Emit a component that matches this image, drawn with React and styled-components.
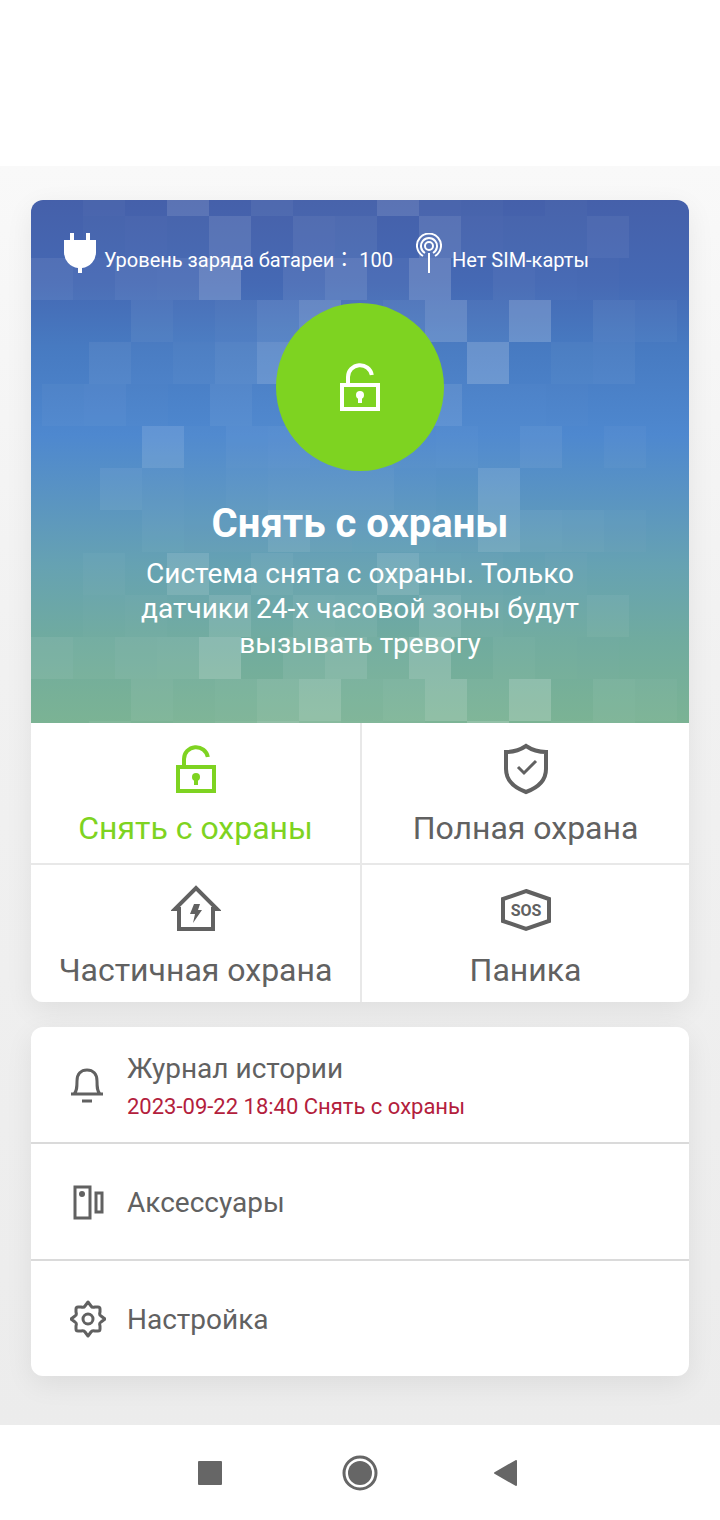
import styled, { createGlobalStyle } from "styled-components";

const GlobalStyle = createGlobalStyle`
  * {
    box-sizing: border-box;
  }
  body {
    margin: 0;
    background-color: #fff;
    color: #616161;
    font-family: Roboto, "Noto Sans CJK TC", sans-serif;
  }
`;

const Page = styled.div`
  display: flex;
  flex-direction: column;
  min-height: 100vh;
`;

const TopBar = styled.header`
  height: 166px;
  background-color: #fff;
`;

const Content = styled.main`
  flex: 1;
  display: flex;
  flex-direction: column;
  gap: 25px;
  padding: 34px 31px 49px;
  background: linear-gradient(#f9f9f9, #f1f1f1 40%, #ececec);
`;

const Card = styled.section`
  border-radius: 12px;
  overflow: hidden;
  background-color: #fff;
  box-shadow: 0 8px 28px rgba(0, 0, 0, 0.07);
`;

const Hero = styled.div`
  position: relative;
  display: flex;
  flex-direction: column;
  align-items: center;
  padding: 33px 33px 62px;
  color: #fff;
  background: linear-gradient(
    #4560aa,
    #4569b4 16%,
    #477ac1 28%,
    #4e88cf 45%,
    #5892c4 55%,
    #66a2b2 70%,
    #70ab9f 84%,
    #7bb394
  );
`;

const Mosaic = styled.svg`
  position: absolute;
  inset: 0;
  width: 100%;
  height: 100%;
`;

const StatusRow = styled.div`
  position: relative;
  align-self: stretch;
  display: flex;
  gap: 23px;
`;

const Status = styled.div`
  display: flex;
  align-items: flex-end;
  gap: ${(props) => props.$gap}px;
  font-size: 20px;
  line-height: 26px;
`;

const StateCircle = styled.div`
  position: relative;
  display: flex;
  align-items: center;
  justify-content: center;
  width: 168px;
  height: 168px;
  margin-top: 30px;
  border-radius: 50%;
  background-color: #7ed321;
`;

const StateTitle = styled.h1`
  position: relative;
  margin: 29px 0 8px;
  font-size: 40px;
  line-height: 48px;
  font-weight: 700;
`;

const StateText = styled.p`
  position: relative;
  margin: 0;
  max-width: 480px;
  font-size: 28px;
  line-height: 35px;
  text-align: center;
`;

const Actions = styled.div`
  display: grid;
  grid-template-columns: 1fr 1fr;
  grid-template-rows: 140px 137px;
  row-gap: 2px;
  background-color: #e8e8e8;
`;

const ActionButton = styled.button`
  display: flex;
  flex-direction: column;
  align-items: center;
  gap: 13px;
  padding: 20px 0 0;
  border: 0;
  background-color: #fff;
  color: ${(props) => (props.$active ? "#7ed321" : "#616161")};
  font-family: inherit;
  font-size: 32px;
  line-height: 40px;
  cursor: pointer;
  &:nth-child(even) {
    border-left: 2px solid #e8e8e8;
  }
`;

const SosText = styled.text`
  font-family: "Liberation Sans Narrow", Roboto, sans-serif;
  font-size: 16px;
  font-weight: 700;
`;

const MenuLink = styled.a`
  display: flex;
  align-items: center;
  gap: 21px;
  height: 115px;
  padding: 0 39px;
  color: #616161;
  text-decoration: none;
  & + & {
    height: 117px;
    border-top: 2px solid #dadada;
  }
`;

const MenuText = styled.div`
  display: flex;
  flex-direction: column;
  gap: 3px;
  padding-top: 2px;
  font-size: 28px;
  line-height: 40px;
`;

const LastEvent = styled.span`
  color: #b3203c;
  font-size: 22px;
  line-height: 30px;
`;

const NavBar = styled.nav`
  display: flex;
  justify-content: center;
  height: 95px;
  background-color: #fff;
`;

const NavButton = styled.button`
  display: flex;
  align-items: center;
  justify-content: center;
  width: 150px;
  padding: 0;
  border: 0;
  background-color: transparent;
  color: #666;
  cursor: pointer;
`;

const TILE = 42;

// x is the left edge of the first tile, tiles hold the opacity of each next one
const mosaicRows = [
  { y: -26, x: 10, tiles: [0, 0.03, 0, 0.12, 0, 0.06, 0.02, 0.02, 0.12, 0.03, 0.02, 0, 0.02] },
  { y: 16, x: 10, tiles: [0, 0.02, 0.03, 0.02, 0.11, 0.01, 0.07, 0.06, 0, 0.11, 0.03, 0.02, 0.02, 0.05] },
  { y: 58, x: 0, tiles: [0.07, 0.04, 0.07, 0.08, 0.19, 0, 0.07, 0.13, 0.04, 0.17, 0, 0.04, 0.02, 0.01] },
  { y: 100, x: 16, tiles: [0, 0, 0.06, 0.03, 0.05, 0.1, 0.18, 0.05, 0.08, 0.17, 0.04, 0.19, 0, 0.05, 0.03] },
  { y: 142, x: 16, tiles: [0, 0.06, 0.02, 0.04, 0.08, 0.17, 0.1, 0.06, 0.05, 0.02, 0.19, 0, 0.03, 0.04] },
  { y: 184, x: 11, tiles: [0.03, 0.04, 0.01, 0, 0.06, 0.02, 0.04, 0.04, 0.05, 0.1, 0.02, 0.02, 0.01] },
  { y: 226, x: 27, tiles: [0, 0, 0.12, 0.02, 0.05, 0.06, 0.05, 0.04, 0.03, 0.04, 0.02, 0.06, 0, 0.03] },
  { y: 268, x: 27, tiles: [0, 0.06, 0.03, 0.02, 0.04, 0.05, 0.05, 0.05, 0.02, 0.01, 0.12, 0, 0] },
  { y: 310, x: 27, tiles: [0, 0, 0.03, 0.02, 0.02, 0.09, 0.04, 0.03, 0.03, 0.02, 0.11, 0.05, 0.04, 0.02] },
];

const mosaicPeriod = 379;

function LockIcon() {
  return (
    <svg width="40" height="52" viewBox="0 -2 40 52" fill="none" stroke="currentColor" strokeWidth="4">
      <path d="M8 22v-8a12 12 0 0 1 23.8-2" />
      <path d="M2 22h36v24H2z" />
      <path d="M20 33v7" />
      <circle cx="20" cy="32" r="4" fill="currentColor" stroke="none" />
    </svg>
  );
}

function ShieldIcon() {
  return (
    <svg width="46" height="52" viewBox="0 0 46 52" fill="none" stroke="currentColor" strokeWidth="4">
      <path d="M23 3C17 7 10 9 3 9v17c0 12 9 19 20 23 11-4 20-11 20-23V9C36 9 29 7 23 3z" />
      <path d="M15 24l6 6 12-12" strokeWidth="3" />
    </svg>
  );
}

function HouseIcon() {
  return (
    <svg width="50" height="52" viewBox="0 0 50 52" fill="none" stroke="currentColor" strokeWidth="4">
      <path d="M8 24H4L25 3l21 21h-4M8 22v22h34V22" />
      <path d="M23 19h6l-2 6h4l-9 13 2-9h-5z" fill="currentColor" stroke="none" />
    </svg>
  );
}

function SosIcon() {
  return (
    <svg width="50" height="52" viewBox="0 0 50 52" fill="none" stroke="currentColor" strokeWidth="4">
      <path d="M25 6l23 8v22l-23 8-23-8V14z" />
      <SosText x="25" y="31" textAnchor="middle" fill="currentColor" stroke="none">
        SOS
      </SosText>
    </svg>
  );
}

function PlugIcon() {
  return (
    <svg width="32" height="40" viewBox="0 0 32 40" fill="currentColor">
      <path d="M6 0h4v7h12V0h4v7h6v12a16 16 0 0 1-14 16v5h-4v-5A16 16 0 0 1 0 19V7h6z" />
    </svg>
  );
}

function AntennaIcon() {
  return (
    <svg width="26" height="40" viewBox="0 0 26 40" fill="none" stroke="currentColor" strokeWidth="2">
      <circle cx="13" cy="13" r="4" />
      <path d="M9 20a8 8 0 1 1 8 0M7 23a12 12 0 1 1 12 0M13 20v20" />
    </svg>
  );
}

function BellIcon() {
  return (
    <svg width="36" height="38" viewBox="0 0 36 38" fill="none" stroke="currentColor" strokeWidth="3">
      <path d="M1 28h32M4 28c3-3 3-7 3-13 0-7 4-11 10-11s10 4 10 11c0 6 0 10 3 13M12 35h10" />
    </svg>
  );
}

function AccessoriesIcon() {
  return (
    <svg width="36" height="38" viewBox="0 0 36 38" fill="none" stroke="currentColor" strokeWidth="3">
      <path d="M5 4h15v31H5zM26 10h6v19h-6z" />
      <circle cx="12" cy="11" r="3" fill="currentColor" stroke="none" />
    </svg>
  );
}

function GearIcon() {
  return (
    <svg width="36" height="38" viewBox="0 0 36 38" fill="none" stroke="currentColor" strokeWidth="3" strokeLinejoin="round">
      <path d="M18 2l3 4q1 2 4 1h3q2 0 2 2v3q-1 3 1 4l4 3-4 3q-2 1-1 4v3q0 2-2 2h-3q-3-1-4 1l-3 4-3-4q-1-2-4-1H8q-2 0-2-2v-3q1-3-1-4l-4-3 4-3q2-1 1-4V9q0-2 2-2h3q3 1 4-1z" />
      <circle cx="18" cy="19" r="5" />
    </svg>
  );
}

const actions = [
  { label: "Снять с охраны", icon: <LockIcon />, active: true },
  { label: "Полная охрана", icon: <ShieldIcon /> },
  { label: "Частичная охрана", icon: <HouseIcon /> },
  { label: "Паника", icon: <SosIcon /> },
];

const menu = [
  { label: "Журнал истории", icon: <BellIcon />, event: "2023-09-22 18:40 Снять с охраны" },
  { label: "Аксессуары", icon: <AccessoriesIcon /> },
  { label: "Настройка", icon: <GearIcon /> },
];

function HeroMosaic() {
  const rows = [...mosaicRows, ...mosaicRows.map((row) => ({ ...row, y: row.y + mosaicPeriod }))];
  return (
    <Mosaic viewBox="0 0 658 523" preserveAspectRatio="xMidYMid slice" aria-hidden="true">
      {rows.map((row) =>
        row.tiles.map((opacity, i) => (
          <rect
            key={`${row.y}-${i}`}
            x={row.x + i * TILE}
            y={row.y}
            width={TILE}
            height={TILE}
            fill="#fff"
            fillOpacity={opacity}
          />
        ))
      )}
    </Mosaic>
  );
}

export default function App() {
  return (
    <>
      <GlobalStyle />
      <Page>
        <TopBar />
        <Content>
          <Card>
            <Hero>
              <HeroMosaic />
              <StatusRow>
                <Status $gap={8}>
                  <PlugIcon />
                  <span>Уровень заряда батареи： 100</span>
                </Status>
                <Status $gap={10}>
                  <AntennaIcon />
                  <span>Нет SIM-карты</span>
                </Status>
              </StatusRow>
              <StateCircle>
                <LockIcon />
              </StateCircle>
              <StateTitle>Снять с охраны</StateTitle>
              <StateText>
                Система снята с охраны. Только датчики 24-х часовой зоны будут вызывать тревогу
              </StateText>
            </Hero>
            <Actions>
              {actions.map((action) => (
                <ActionButton key={action.label} type="button" $active={action.active}>
                  {action.icon}
                  {action.label}
                </ActionButton>
              ))}
            </Actions>
          </Card>
          <Card>
            {menu.map((item) => (
              <MenuLink key={item.label} href="#">
                {item.icon}
                <MenuText>
                  {item.label}
                  {item.event && <LastEvent>{item.event}</LastEvent>}
                </MenuText>
              </MenuLink>
            ))}
          </Card>
        </Content>
        <NavBar>
          <NavButton type="button" aria-label="Недавние">
            <svg width="24" height="24" fill="currentColor">
              <rect width="24" height="24" rx="1" />
            </svg>
          </NavButton>
          <NavButton type="button" aria-label="Домой">
            <svg width="36" height="36" fill="currentColor">
              <circle cx="18" cy="18" r="16" fill="none" stroke="currentColor" strokeWidth="3" />
              <circle cx="18" cy="18" r="12" />
            </svg>
          </NavButton>
          <NavButton type="button" aria-label="Назад">
            <svg width="32" height="26" fill="currentColor" stroke="currentColor" strokeWidth="2" strokeLinejoin="round">
              <path d="M1 13L22 1v24z" />
            </svg>
          </NavButton>
        </NavBar>
      </Page>
    </>
  );
}
